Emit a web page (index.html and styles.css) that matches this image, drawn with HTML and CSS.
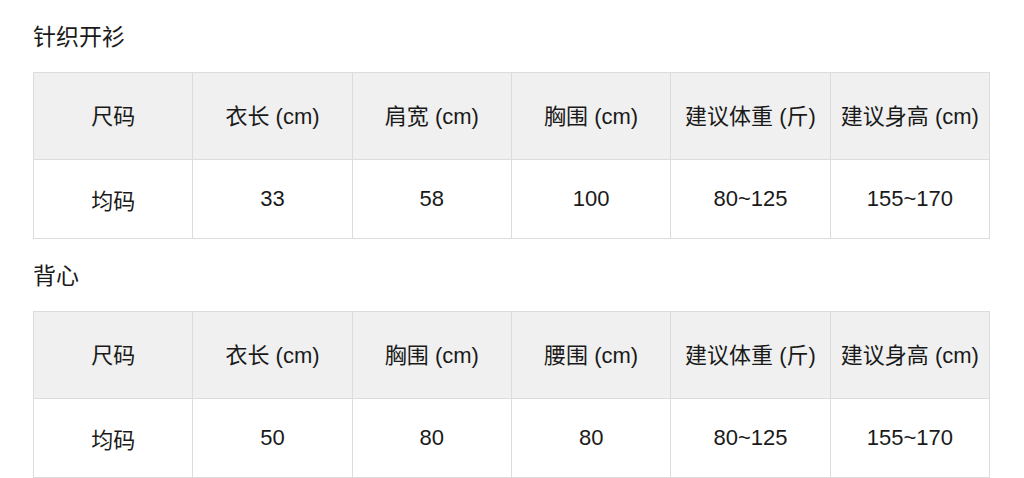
FILE: index.html
```html
<!DOCTYPE html>
<html lang="zh">
<head>
<meta charset="utf-8">
<link rel="stylesheet" href="styles.css">
</head>
<body>
<div class="page">
  <h2 class="title">针织开衫</h2>
  <table class="size-table">
    <tr class="head">
      <td>尺码</td><td>衣长 (cm)</td><td>肩宽 (cm)</td><td>胸围 (cm)</td><td>建议体重 (斤)</td><td>建议身高 (cm)</td>
    </tr>
    <tr class="row">
      <td>均码</td><td>33</td><td>58</td><td>100</td><td>80~125</td><td>155~170</td>
    </tr>
  </table>
  <h2 class="title">背心</h2>
  <table class="size-table">
    <tr class="head">
      <td>尺码</td><td>衣长 (cm)</td><td>胸围 (cm)</td><td>腰围 (cm)</td><td>建议体重 (斤)</td><td>建议身高 (cm)</td>
    </tr>
    <tr class="row">
      <td>均码</td><td>50</td><td>80</td><td>80</td><td>80~125</td><td>155~170</td>
    </tr>
  </table>
</div>
</body>
</html>
```

FILE: styles.css
```css
html, body {
  margin: 0;
  padding: 0;
  background: #fff;
}
.page {
  padding: 22px 0 0 33px;
  font-family: "Liberation Sans", "Noto Sans CJK SC", sans-serif;
  color: #1a1a1a;
}
.title {
  margin: 0 0 20px 0;
  font-size: 23px;
  font-weight: 400;
  line-height: 30px;
  height: 30px;
}
.size-table {
  border-collapse: collapse;
  table-layout: fixed;
  width: 957px;
  margin-bottom: 22px;
}
.size-table td {
  border: 1px solid #dcdcdc;
  text-align: center;
  font-size: 22px;
  padding: 0;
  box-sizing: border-box;
}
.head td {
  background: #f0f0f0;
  height: 87px;
  padding-bottom: 5px;
}
.row td {
  height: 79px;
}
```
